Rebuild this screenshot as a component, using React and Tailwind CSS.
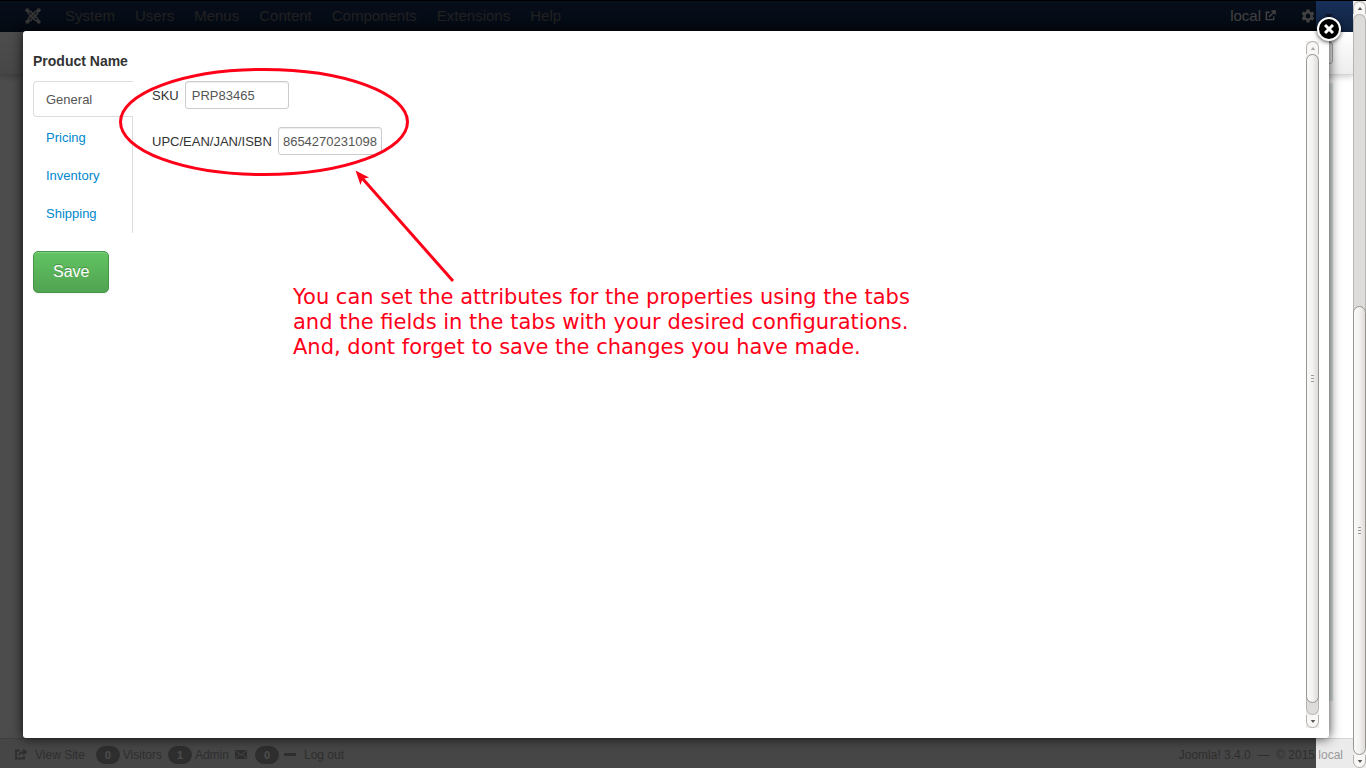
import React, { useState } from "react";
import { MdSettings } from "react-icons/md";

const menu = ["System", "Users", "Menus", "Content", "Components", "Extensions", "Help"];
const tabs = ["General", "Pricing", "Inventory", "Shipping"];

function JoomlaIcon() {
  return (
    <svg viewBox="0 0 16 16" className="size-4 text-[#b4b4b4]" fill="none" stroke="currentColor" aria-hidden="true">
      <g strokeWidth="1.7">
        <path d="M3 5.5Q3 3 5.500 3.500L12.500 10.500" />
        <path d="M10.500 3Q13 3 12.500 5.500L5.500 12.500" />
        <path d="M13 10.500Q13 13 10.500 12.500L3.500 5.500" />
        <path d="M5.500 13Q3 13 3.500 10.500L10.500 3.500" />
      </g>
      <g fill="currentColor" stroke="none">
        <circle cx="2.3" cy="2.3" r="2" />
        <circle cx="13.7" cy="2.3" r="2" />
        <circle cx="2.3" cy="13.7" r="2" />
        <circle cx="13.7" cy="13.7" r="2" />
      </g>
    </svg>
  );
}

function ScrollArrow({ up, faint }) {
  return (
    <span className={"flex h-[13px] w-full shrink-0 items-center justify-center border border-[#b4b2af] bg-[#f8f7f6] " + (up ? "rounded-t-full border-b-0" : "rounded-b-full border-t-0")}>
      <svg viewBox="0 0 6 4" className={"h-[3px] w-[6px] " + (faint ? "text-[#aaa]" : "text-[#555]")} aria-hidden="true">
        <path d={up ? "M0 4L3 0L6 4Z" : "M0 0L3 4L6 0Z"} fill="currentColor" />
      </svg>
    </span>
  );
}

function ScrollThumb() {
  return (
    <span className="relative flex min-h-0 w-full flex-1 flex-col items-center justify-center gap-[2px] rounded-full border border-[#999692] bg-linear-to-r from-[#fafafa] via-[#f3f2f1] to-[#dedbd9]">
      <span className="h-px w-[3px] bg-[#999]" />
      <span className="h-px w-[3px] bg-[#999]" />
      <span className="h-px w-[3px] bg-[#999]" />
    </span>
  );
}

function Badge({ children }) {
  return <span className="flex h-[18px] w-6 items-center justify-center rounded-full bg-[#999] text-[11px] font-bold text-white">{children}</span>;
}

export default function App() {
  const [active, setActive] = useState("General");
  const [sku, setSku] = useState("PRP83465");
  const [upc, setUpc] = useState("8654270231098");

  return (
    <div className="relative flex h-screen overflow-hidden bg-white font-['Liberation_Sans',Arial,sans-serif] text-[13px] leading-[18px] text-[#333]">
      <div className="flex min-w-0 flex-1 flex-col">
        <header className="flex h-8 shrink-0 items-center border-t border-black bg-linear-to-b from-[#17305a] to-[#10223e] pr-5 pb-[2px] pl-[25px] text-[15px] text-[#d9d9d9]">
          <JoomlaIcon />
          <nav className="ml-6 flex gap-5 text-[#6e6e6e]">
            {menu.map((m) => <a key={m} href="#">{m}</a>)}
          </nav>
          <a href="#" className="ml-auto flex items-center gap-1">
            local
            <svg viewBox="0 0 12 12" className="size-[11px]" fill="none" stroke="currentColor" strokeWidth="1.6" aria-hidden="true">
              <path d="M5 2.5H1.5v8h8V7M4.500 7.500L10.500 1.500M7 1h4v4" />
            </svg>
          </a>
          <button type="button" aria-label="Settings" className="ml-6 flex items-center gap-[9px]">
            <MdSettings className="size-4" />
            <svg viewBox="0 0 8 4" className="h-1 w-2" aria-hidden="true"><path d="M0 0h8L4 4Z" fill="#0a1526" /></svg>
          </button>
        </header>
        <div className="flex h-[43px] shrink-0 items-center justify-end border-b border-[#d5d5d5] bg-linear-to-b from-white to-[#ededed] pr-5 shadow-[0_2px_6px_rgba(0,0,0,0.2)]">
          <button type="button" aria-label="Help" className="h-[22px] w-16 rounded-[3px] border border-[#aaa] bg-[#eee]" />
        </div>
        <div className="mt-2 mr-5 mb-[37px] ml-6 flex-1 bg-[#dfe7e6]" />
        <footer className="flex h-[30px] shrink-0 items-center border-t border-[#d4d4d4] bg-[#ebebeb] pt-[2px] pr-[10px] pl-[15px] text-[12px] text-[#999]">
          <svg viewBox="0 0 13 11" className="h-[11px] w-[13px]" fill="none" stroke="currentColor" strokeWidth="1.8" aria-hidden="true">
            <path d="M5 1.500H1v8h8V7M4 6q1-3 6-3M8 .5L11 3L8 5.500" />
          </svg>
          <a href="#" className="mr-[11px] ml-[7px]">View Site</a>
          <Badge>0</Badge><span className="mr-[6px] ml-[3px]">Visitors</span>
          <Badge>1</Badge><span className="mr-[6px] ml-[3px]">Admin</span>
          <svg viewBox="0 0 12 9" className="mr-2 h-[9px] w-3" aria-hidden="true">
            <rect width="12" height="9" rx="1" fill="currentColor" />
            <path d="M1 1l5 4 5-4M1 8l3.500-3.500M11 8L7.500 4.500" fill="none" stroke="#ebebeb" />
          </svg>
          <Badge>0</Badge>
          <span className="mr-2 ml-[5px] h-[3px] w-3 bg-[#999]" />
          <a href="#">Log out</a>
          <span className="ml-auto whitespace-pre">Joomla! 3.4.0  —  © 2015 local</span>
        </footer>
      </div>

      <div className="relative z-10 flex w-[13px] shrink-0 flex-col border-t border-black bg-[#efedeb]">
        <ScrollArrow up />
        <span className="-mb-2 h-[300px] w-full shrink-0 rounded-t-full border border-b-0 border-[#b8b6b3] bg-[#dedcda]" />
        <ScrollThumb />
        <ScrollArrow />
      </div>

      <div className="absolute inset-y-0 right-[50px] left-0 bg-black/70" />

      <main className="absolute top-[31px] right-[37px] bottom-[30px] left-[23px] flex rounded-[3px] bg-white p-[10px] shadow-[0_0_12px_rgba(0,0,0,0.8)]" role="dialog" aria-label="Product Name">
        <div className="min-w-0 flex-1">
          <h1 className="mt-[11px] mb-[11px] text-[14px] font-bold">Product Name</h1>
          <div className="flex">
            <div role="tablist" className="flex w-[100px] flex-col gap-[2px] bg-[linear-gradient(#ddd,#ddd)] bg-[length:1px_100%] bg-right bg-no-repeat pb-[2px]">
              {tabs.map((t) => (
                <button
                  key={t}
                  type="button"
                  role="tab"
                  aria-selected={t === active}
                  onClick={() => setActive(t)}
                  className={"h-9 rounded-l-[4px] border border-r-0 pt-[2px] pl-3 text-left " + (t === active ? "border-[#ddd] bg-white text-[#555]" : "mr-px border-transparent text-[#08c]")}
                >
                  {t}
                </button>
              ))}
            </div>
            <form className="ml-[19px] flex flex-col gap-[18px]" onSubmit={(e) => e.preventDefault()}>
              <div className="flex items-center gap-[6px]">
                <label htmlFor="sku" className="pt-[2px]">SKU</label>
                <input id="sku" value={sku} onChange={(e) => setSku(e.target.value)} className="h-7 w-[104px] rounded-[3px] border border-[#ccc] px-[6px] text-[#555] shadow-[inset_0_1px_1px_rgba(0,0,0,0.075)]" />
              </div>
              <div className="flex items-center gap-[6px]">
                <label htmlFor="upc" className="pt-[2px]">UPC/EAN/JAN/ISBN</label>
                <input id="upc" value={upc} onChange={(e) => setUpc(e.target.value)} className="h-7 w-[104px] rounded-[3px] border border-[#ccc] px-1 text-[#555] shadow-[inset_0_1px_1px_rgba(0,0,0,0.075)]" />
              </div>
            </form>
          </div>
          <button type="button" className="mt-[18px] h-[42px] rounded-[5px] border border-[#46934a] bg-linear-to-b from-[#62c462] to-[#51a351] px-[19px] text-[16px] text-white shadow-[inset_0_1px_0_rgba(255,255,255,0.2),0_1px_2px_rgba(0,0,0,0.05)] [text-shadow:0_-1px_0_rgba(0,0,0,0.25)]">
            Save
          </button>
        </div>
        <div className="flex w-[13px] shrink-0 flex-col bg-[#efedeb]">
          <ScrollArrow up faint />
          <ScrollThumb />
          <span className="-mt-2 h-5 w-full rounded-b-full border border-t-0 border-[#b8b6b3] bg-[#dedcda]" />
          <ScrollArrow />
        </div>
        <button type="button" aria-label="Close" className="absolute -top-[14px] -right-3 flex size-6 items-center justify-center rounded-full border-2 border-white bg-black shadow-[0_1px_4px_rgba(0,0,0,0.7)]">
          <svg viewBox="0 0 10 10" className="size-[10px]" stroke="white" strokeWidth="3" aria-hidden="true"><path d="M1 1l8 8M9 1l-8 8" /></svg>
        </button>
      </main>

      <svg viewBox="0 0 340 220" className="pointer-events-none absolute top-[66px] left-[118px] h-[220px] w-[340px]" aria-hidden="true">
        <ellipse cx="146" cy="56" rx="143.500" ry="52.500" fill="none" stroke="#ff0019" strokeWidth="3" />
        <path d="M335 215L244 112" stroke="#ff0019" strokeWidth="3" />
        <path d="M237.500 104.500L251 111.500L244.500 113L242.500 119Z" fill="#ff0019" />
      </svg>
      <p className="absolute top-[285px] left-[293px] font-['DejaVu_Sans',sans-serif] text-[21px] leading-[25px] text-[#ff0019]">
        You can set the attributes for the properties using the tabs<br />
        and the fields in the tabs with your desired configurations.<br />
        And, dont forget to save the changes you have made.
      </p>
    </div>
  );
}
